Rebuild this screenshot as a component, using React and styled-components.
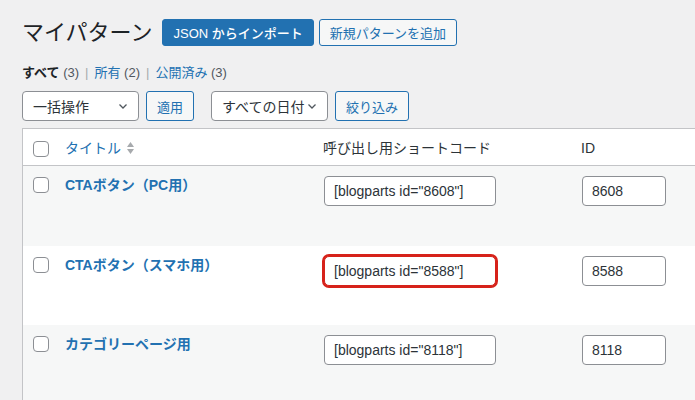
import styled, { createGlobalStyle, css } from 'styled-components';

const GlobalStyle = createGlobalStyle`
  html, body {
    margin: 0;
    background: #f0f0f1;
    overflow: hidden;
  }
  body {
    font-family: "Liberation Sans", "Noto Sans CJK JP", sans-serif;
    color: #1d2327;
  }
`;

const Page = styled.div`
  box-sizing: border-box;
  width: 100%;
  height: 100vh;
  overflow: hidden;
  padding: 19px 0 0 22px;
`;

const Header = styled.div`
  display: flex;
  align-items: center;
  gap: 5px;
  height: 27px;
`;

const Title = styled.h1`
  margin: 0 5px 0 0;
  font-size: 22px;
  font-weight: 400;
  line-height: 27px;
  color: #1d2327;
`;

const Button = styled.button`
  height: ${(p) => p.$h || 27}px;
  padding: 0 ${(p) => p.$pad || 10}px;
  font-family: inherit;
  font-size: 13px;
  border-radius: 3px;
  border: 1px solid #2271b1;
  background: #f6f7f7;
  color: #2271b1;
  cursor: pointer;
  ${(p) =>
    p.$primary &&
    css`
      background: #2271b1;
      color: #fff;
      font-weight: 500;
    `}
`;

const Views = styled.div`
  display: flex;
  align-items: center;
  margin-top: 18px;
  font-size: 13px;
  line-height: 18px;
  color: #50575e;
`;

const ViewLink = styled.span`
  color: ${(p) => (p.$current ? '#1d2327' : '#2271b1')};
  font-weight: ${(p) => (p.$current ? 700 : 400)};
`;

const Sep = styled.span`
  color: #a7aaad;
  margin: 0 6px;
`;

const Tablenav = styled.div`
  display: flex;
  align-items: center;
  margin-top: 9px;
  height: 30px;
`;

const Select = styled.div`
  box-sizing: border-box;
  width: ${(p) => p.$w}px;
  height: 30px;
  display: flex;
  align-items: center;
  justify-content: space-between;
  padding: 0 9px 0 10px;
  background: #fff;
  border: 1px solid #8c8f94;
  border-radius: 4px;
  font-size: 14px;
  color: #2c3338;
  margin-right: 7px;
`;

const Group = styled.div`
  display: flex;
  align-items: center;
  margin-right: 17px;
`;

const TableWrap = styled.div`
  width: 740px;
  margin-top: 7px;
  background: #fff;
  border: 1px solid #c3c4c7;
  border-right: none;
`;

const Row = styled.div`
  display: grid;
  grid-template-columns: 32px 258px 258px 1fr;
  height: ${(p) => p.$h}px;
  background: ${(p) => (p.$alt ? '#f6f7f7' : '#fff')};
  border-bottom: ${(p) => (p.$head ? '1px solid #c3c4c7' : 'none')};
  box-sizing: border-box;
`;

const CheckCell = styled.div`
  padding: ${(p) => (p.$head ? 12 : 11)}px 0 0 10px;
`;

const Checkbox = styled.span`
  display: block;
  box-sizing: border-box;
  width: 16px;
  height: 16px;
  border: 1px solid #8c8f94;
  border-radius: 4px;
  background: #fff;
`;

const Cell = styled.div`
  padding: 10px 10px 0;
  font-size: 14px;
`;

const HeadText = styled.span`
  display: inline-flex;
  align-items: center;
  gap: 5px;
  line-height: 18px;
  color: ${(p) => (p.$link ? '#2271b1' : '#2c3338')};
`;

const RowTitle = styled.a`
  display: block;
  font-size: 14px;
  font-weight: 700;
  line-height: 18px;
  color: #2271b1;
  text-decoration: none;
`;

const Field = styled.div`
  box-sizing: border-box;
  width: ${(p) => p.$w}px;
  height: 30px;
  margin-left: 1px;
  padding: 0 9px;
  display: flex;
  align-items: center;
  background: #fff;
  border: 1px solid #8c8f94;
  border-radius: 4px;
  font-size: 14px;
  color: #2c3338;
  white-space: nowrap;
  ${(p) =>
    p.$marked &&
    css`
      border-color: #d6221a;
      box-shadow: 0 0 0 2px #d6221a;
      border-radius: 5px;
    `}
`;

const Chevron = () => (
  <svg width="12" height="12" viewBox="0 0 12 12" fill="none">
    <path d="M2.5 4.5 6 8l3.5-3.5" stroke="#50575e" strokeWidth="1.3" />
  </svg>
);

const SortIcon = () => (
  <svg width="9" height="16" viewBox="0 0 9 16">
    <path d="M4.5 2 8 7H1z" fill="#a7aaad" />
    <path d="M4.5 14 8 9H1z" fill="#a7aaad" />
  </svg>
);

const rows = [
  { title: 'CTAボタン（PC用）', id: '8608', alt: true },
  { title: 'CTAボタン（スマホ用）', id: '8588', marked: true },
  { title: 'カテゴリーページ用', id: '8118', alt: true },
];

export default function App() {
  return (
    <Page>
      <GlobalStyle />
      <Header>
        <Title>マイパターン</Title>
        <Button $primary>JSON からインポート</Button>
        <Button>新規パターンを追加</Button>
      </Header>

      <Views>
        <ViewLink $current>すべて</ViewLink>&nbsp;(3)
        <Sep>|</Sep>
        <ViewLink>所有</ViewLink>&nbsp;(2)
        <Sep>|</Sep>
        <ViewLink>公開済み</ViewLink>&nbsp;(3)
      </Views>

      <Tablenav>
        <Group>
          <Select $w={117}>
            一括操作
            <Chevron />
          </Select>
          <Button $h={30} $pad={10}>適用</Button>
        </Group>
        <Group>
          <Select $w={117}>
            すべての日付
            <Chevron />
          </Select>
          <Button $h={30} $pad={10}>絞り込み</Button>
        </Group>
      </Tablenav>

      <TableWrap>
        <Row $head $h={37}>
          <CheckCell $head>
            <Checkbox />
          </CheckCell>
          <Cell>
            <HeadText $link>
              タイトル
              <SortIcon />
            </HeadText>
          </Cell>
          <Cell>
            <HeadText>呼び出し用ショートコード</HeadText>
          </Cell>
          <Cell>
            <HeadText>ID</HeadText>
          </Cell>
        </Row>
        {rows.map((r) => (
          <Row key={r.id} $alt={r.alt} $h={79.5}>
            <CheckCell>
              <Checkbox />
            </CheckCell>
            <Cell>
              <RowTitle>{r.title}</RowTitle>
            </Cell>
            <Cell>
              <Field $w={172} $marked={r.marked}>
                [blogparts id="{r.id}"]
              </Field>
            </Cell>
            <Cell>
              <Field $w={84}>{r.id}</Field>
            </Cell>
          </Row>
        ))}
      </TableWrap>
    </Page>
  );
}
